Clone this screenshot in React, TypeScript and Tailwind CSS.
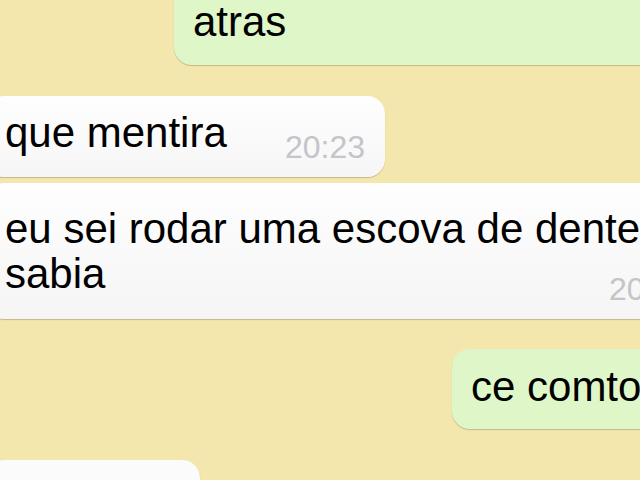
export default function App() {
  return (
    <div
      className="w-[640px] h-[480px] overflow-hidden bg-[#f3e7ae] text-black"
      style={{ fontFamily: '"Liberation Sans", Arial, sans-serif' }}
    >
      <div className="flex flex-col">
        {/* outgoing: atras */}
        <div className="flex">
          <div className="ml-[174px] mr-[-60px] mt-[-20px] flex-1 rounded-[18px] bg-[#dff6c8] pl-[19px] pt-[19px] pb-[21px] shadow-[0_1px_1px_rgba(0,0,0,0.2)]">
            <span className="text-[42px] leading-[45px]">atras</span>
          </div>
        </div>

        {/* incoming: que mentira */}
        <div className="mt-[31px] flex">
          <div className="ml-[-14px] flex w-[399px] items-end justify-between rounded-[18px] bg-gradient-to-b from-[#fefefe] to-[#f6f6f6] pl-[19px] pr-[20px] pt-[14px] pb-[22px] shadow-[0_1px_1px_rgba(0,0,0,0.2)]">
            <span className="text-[42px] leading-[45px] whitespace-nowrap">que mentira</span>
            <span className="mb-[-8px] text-[32px] leading-[32px] text-[#c4c4c9]">20:23</span>
          </div>
        </div>

        {/* incoming: two lines */}
        <div className="mt-[6px] flex">
          <div className="ml-[-14px] w-[723px] shrink-0 rounded-[18px] bg-gradient-to-b from-[#fefefe] to-[#f5f5f5] pl-[19px] pr-[20px] pt-[23px] pb-[23px] shadow-[0_1px_1px_rgba(0,0,0,0.2)]">
            <div className="text-[42px] leading-[45px] whitespace-nowrap">eu sei rodar uma escova de dentes</div>
            <div className="flex items-end justify-between">
              <span className="text-[42px] leading-[45px]">sabia</span>
              <span className="mb-[-9px] text-[32px] leading-[32px] text-[#c4c4c9]">20:24</span>
            </div>
          </div>
        </div>

        {/* outgoing: ce comto */}
        <div className="mt-[30px] flex">
          <div className="ml-[452px] mr-[-120px] flex-1 rounded-[18px] bg-[#dff6c8] pl-[19px] pt-[15px] pb-[20px] shadow-[0_1px_1px_rgba(0,0,0,0.2)]">
            <span className="text-[42px] leading-[45px] whitespace-nowrap">ce comtou</span>
          </div>
        </div>

        {/* incoming: next message, cut off */}
        <div className="mt-[31px] flex">
          <div className="ml-[-14px] h-[80px] w-[214px] rounded-[18px] bg-[#fbfbfb] shadow-[0_1px_1px_rgba(0,0,0,0.2)]" />
        </div>
      </div>
    </div>
  );
}
